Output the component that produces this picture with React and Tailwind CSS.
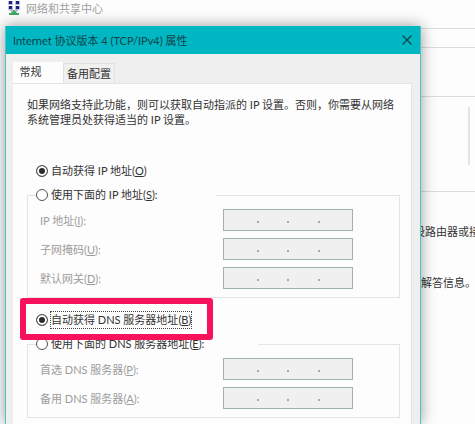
import React from "react";
import { useState } from "react";

const ipFields = [
  { id: "ip", label: "IP 地址", hotkey: "I" },
  { id: "mask", label: "子网掩码", hotkey: "U" },
  { id: "gateway", label: "默认网关", hotkey: "D" },
];

const dnsFields = [
  { id: "dns1", label: "首选 DNS 服务器", hotkey: "P" },
  { id: "dns2", label: "备用 DNS 服务器", hotkey: "A" },
];

const NetworkIcon = () => (
  <svg width="14" height="16" viewBox="0 0 14 16" aria-hidden="true">
    <path d="M7 10v3M4 9v2h6v-2" fill="none" stroke="#7d8a9c" />
    {[
      [1, 1],
      [8, 1],
      [1, 6],
      [8, 6],
    ].map(([x, y]) => (
      <g key={`${x}-${y}`}>
        <rect x={x} y={y} width="5" height="4" fill="#b4bce2" />
        <rect x={x + 1} y={y} width="3" height="3" fill="#20207c" />
      </g>
    ))}
    <path d="M7 10l3 3h2v2H2v-2h2z" fill="#3dab62" />
  </svg>
);

const Radio = ({ id, name, label, hotkey, suffix, checked, focused, onChange }) => (
  <div className="flex items-center h-6 gap-[2px]">
    <input
      type="radio"
      id={id}
      name={name}
      checked={checked}
      onChange={onChange}
      className="appearance-none shrink-0 w-3 h-3 rounded-full border border-[#555] bg-white checked:bg-[#2b2b2b] checked:shadow-[inset_0_0_0_2px_#fff]"
    />
    <label
      htmlFor={id}
      className={
        focused
          ? "h-[18px] leading-4 whitespace-nowrap border border-dotted border-[#444]"
          : "h-[18px] leading-4 whitespace-nowrap border border-transparent"
      }
    >
      {label}(<u>{hotkey}</u>){suffix}
    </label>
  </div>
);

const AddressField = ({ id, label, hotkey }) => (
  <div className="flex items-center pl-1">
    <label htmlFor={id} className="w-[183px] shrink-0 text-[#9c9c9c]">
      {label}(<u>{hotkey}</u>):
    </label>
    <div className="flex items-center w-[130px] h-[22px] px-1 border border-[#a3b2a8] bg-[#eff0ef]">
      {[1, 2, 3, 4].map((part) => (
        <React.Fragment key={part}>
          {part > 1 && <span className="w-[2px] h-[2px] mt-1 bg-[#a6a6a6]"></span>}
          <input
            id={part === 1 ? id : `${id}-${part}`}
            aria-label={part === 1 ? undefined : `${label} ${part}`}
            disabled
            maxLength={3}
            className="flex-1 min-w-0 h-full text-center bg-transparent"
          />
        </React.Fragment>
      ))}
    </div>
  </div>
);

const App = () => {
  const [ipMode, setIpMode] = useState("auto");
  const [dnsMode, setDnsMode] = useState("auto");

  return (
    <div className="flex flex-col h-screen overflow-hidden bg-[#fdfdfd] text-[11px] leading-[15px] text-[#333] font-['Lato','Noto_Sans_CJK_SC',sans-serif]">
      <header className="flex items-start h-[26px] pl-[7px] gap-[5px] shrink-0">
        <NetworkIcon />
        <span className="pt-px text-[#a0a0a0]">网络和共享中心</span>
      </header>

      <div className="flex flex-1 min-h-0">
        {/* Dialog */}
        <section className="relative z-10 flex flex-col flex-1 min-w-0 ml-[5px] border-x border-[#45c8c8] bg-[#efefef] shadow-[0_0_14px_rgba(0,0,0,0.4)]">
          <div className="flex items-center justify-between h-7 pl-[7px] pr-2 shrink-0 bg-[#00b7c3] text-[#124348]">
            <h1>Internet 协议版本 4 (TCP/IPv4) 属性</h1>
            <button aria-label="关闭">
              <svg width="10" height="10" viewBox="0 0 10 10">
                <path d="M0.5 0.5l9 9M9.5 0.5l-9 9" stroke="#17474b" strokeWidth="1.2" />
              </svg>
            </button>
          </div>

          <div className="flex flex-col flex-1 min-h-0 pt-2 pl-[7px] pr-2">
            {/* Tabs */}
            <div role="tablist" className="flex items-end h-[21px] shrink-0">
              <button role="tab" aria-selected="true" className="w-[50px] h-full pb-[2px] pr-[15px] bg-[#fdfdfd]">
                常规
              </button>
              <button role="tab" aria-selected="false" className="w-[52px] h-5 border border-b-0 border-[#e2e2e2] bg-[#f0f0f0] whitespace-nowrap">
                备用配置
              </button>
            </div>

            <div role="tabpanel" className="flex-1 pt-[13px] pl-[14px] pr-[11px] border-t border-r border-[#e4e4e4] bg-[#fdfdfd]">
              <p className="mb-8 whitespace-nowrap">
                如果网络支持此功能，则可以获取自动指派的 IP 设置。否则，你需要从网络
                <br />
                系统管理员处获得适当的 IP 设置。
              </p>

              <div className="pl-[9px]">
                <Radio
                  id="ip-auto"
                  name="ip-mode"
                  label="自动获得 IP 地址"
                  hotkey="O"
                  checked={ipMode === "auto"}
                  onChange={() => setIpMode("auto")}
                />
              </div>
              <fieldset className="px-2 pt-[2px] pb-2 border border-[#e4e4e4]">
                <legend className="w-[180px]">
                  <Radio
                    id="ip-manual"
                    name="ip-mode"
                    label="使用下面的 IP 地址"
                    hotkey="S"
                    suffix=":"
                    checked={ipMode === "manual"}
                    onChange={() => setIpMode("manual")}
                  />
                </legend>
                <div className="flex flex-col gap-[7px]">
                  {ipFields.map((field) => (
                    <AddressField key={field.id} {...field} />
                  ))}
                </div>
              </fieldset>

              <div className="relative z-10 w-fit mt-[10px] pl-[9px] pr-[14px]">
                <Radio
                  id="dns-auto"
                  name="dns-mode"
                  label="自动获得 DNS 服务器地址"
                  hotkey="B"
                  focused
                  checked={dnsMode === "auto"}
                  onChange={() => setDnsMode("auto")}
                />
                {/* Highlight */}
                <div className="absolute -left-[7px] right-[-7px] -top-[10px] -bottom-2 border-[6px] border-[#f8125c] rounded-[3px] pointer-events-none"></div>
              </div>
              <fieldset className="px-2 pt-[2px] pb-2 border border-[#e4e4e4]">
                <legend className="w-[222px]">
                  <Radio
                    id="dns-manual"
                    name="dns-mode"
                    label="使用下面的 DNS 服务器地址"
                    hotkey="E"
                    suffix=":"
                    checked={dnsMode === "manual"}
                    onChange={() => setDnsMode("manual")}
                  />
                </legend>
                <div className="flex flex-col gap-[7px]">
                  {dnsFields.map((field) => (
                    <AddressField key={field.id} {...field} />
                  ))}
                </div>
              </fieldset>
            </div>
          </div>
        </section>

        {/* Window behind the dialog */}
        <aside className="flex flex-col w-[54px] pt-[2px] shrink-0 whitespace-nowrap">
          <div className="h-5 border-y border-[#dcdcdc]"></div>
          <div className="h-12"></div>
          <div className="flex justify-end h-24 py-[10px] pr-[5px] border-y border-[#dcdcdc]">
            <div className="h-[58px] border-l-2 border-[#e4e4e4]"></div>
          </div>
          <p className="mt-8 -ml-[7px]">设路由器或接</p>
          <p className="mt-9">解答信息。</p>
        </aside>
      </div>
    </div>
  );
};

export default App;
